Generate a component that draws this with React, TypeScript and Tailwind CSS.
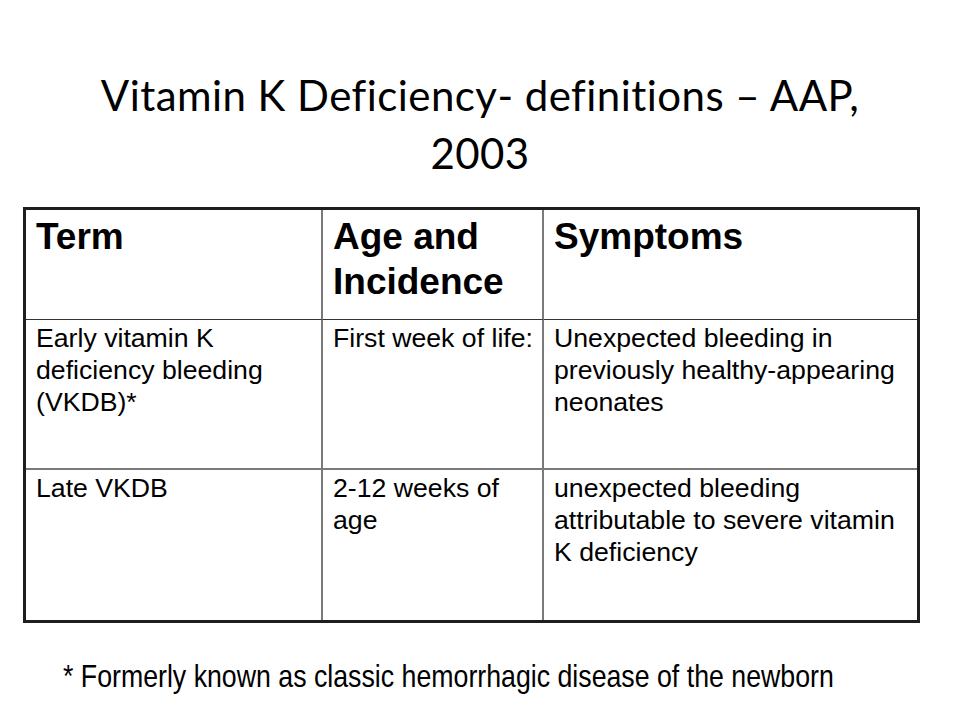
const rows = [
  {
    term: "Early vitamin K deficiency bleeding (VKDB)*",
    age: "First week of life:",
    symptoms: "Unexpected bleeding in previously healthy-appearing neonates",
    line: "border-b-2 border-[#7a7a7a]",
  },
  {
    term: "Late VKDB",
    age: "2-12 weeks of age",
    symptoms: "unexpected bleeding attributable to severe vitamin K deficiency",
    line: "",
  },
]

const HeadCell = ({ text, last }: { text: string; last?: boolean }) => (
  <div
    className={`h-[110px] pl-[10px] pr-[6px] pt-[5px] text-[37px] leading-[44.8px] font-bold border-b border-[#333] ${
      last ? "" : "border-r-2 border-r-[#7a7a7a]"
    }`}
  >
    {text}
  </div>
)

const BodyCell = ({ text, line, last }: { text: string; line: string; last?: boolean }) => (
  <div
    className={`h-[150px] pl-[10px] pr-[4px] pt-[2px] text-[26.67px] leading-[32px] ${line} ${
      last ? "" : "border-r-2 border-r-[#7a7a7a]"
    }`}
  >
    {text}
  </div>
)

const App = () => {
  return (
    <div className="w-[960px] h-[720px] bg-white text-black overflow-hidden flex flex-col">
      <h1
        className="pt-[67px] text-center text-[42px] leading-[57.5px] tracking-[0.45px] font-normal"
        style={{ fontFamily: "Lato, 'Open Sans', sans-serif" }}
      >
        Vitamin K Deficiency- definitions – AAP,
        <br />
        2003
      </h1>

      <div
        className="ml-[23px] mt-[25px] w-[897px] border-[3px] border-[#1e1e1e] grid grid-cols-[297px_221px_373px]"
        style={{ fontFamily: "'Liberation Sans', Arial, sans-serif" }}
      >
        <HeadCell text="Term" />
        <HeadCell text="Age and Incidence" />
        <HeadCell text="Symptoms" last />
        {rows.map((r) => (
          <div key={r.term} className="contents">
            <BodyCell text={r.term} line={r.line} />
            <BodyCell text={r.age} line={r.line} />
            <BodyCell text={r.symptoms} line={r.line} last />
          </div>
        ))}
      </div>

      <div className="mt-[37px] ml-[63px]">
        <p
          className="inline-block origin-left scale-x-[0.835] whitespace-nowrap text-[32px] leading-[32px]"
          style={{ fontFamily: "'Liberation Sans', Arial, sans-serif" }}
        >
          * Formerly known as classic hemorrhagic disease of the newborn
        </p>
      </div>
    </div>
  )
}

export default App
